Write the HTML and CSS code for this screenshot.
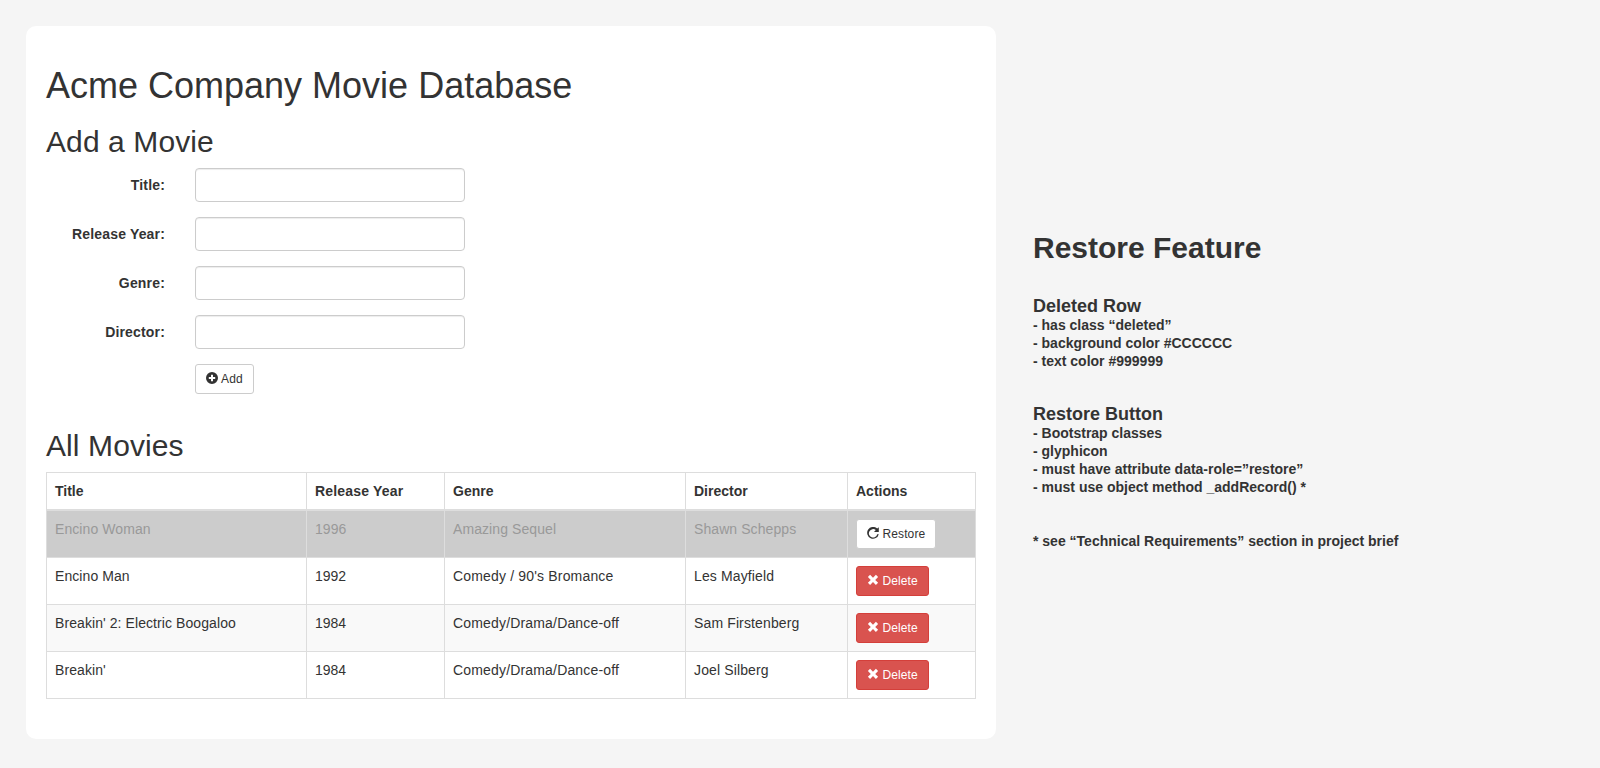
FILE: index.html
```html
<!DOCTYPE html>
<html lang="en">
<head>
<meta charset="utf-8">
<title>Acme Company Movie Database</title>
<link rel="stylesheet" href="styles.css">
</head>
<body>
<svg class="sprite" aria-hidden="true">
  <symbol id="plus" viewBox="0 0 12 12"><path fill-rule="evenodd" d="M6 0a6 6 0 1 0 0 12A6 6 0 0 0 6 0zM5 2.8h2V5h2.2v2H7v2.2H5V7H2.8V5H5z"/></symbol>
  <symbol id="remove" viewBox="0 0 12 12"><path d="M3.1 .8L6 3.7 8.9.8l2.2 2.2L8.2 5.9l2.9 2.9L8.9 11 6 8.1 3.1 11 .9 8.8l2.9-2.9L.9 3z"/></symbol>
  <symbol id="repeat" viewBox="0 0 12 12"><path d="M10.2 1.6L11.8 .2v4.7H7l1.8-1.8A4.2 4.2 0 1 0 10.2 7.2h1.6A5.9 5.9 0 1 1 10.2 1.6z"/></symbol>
</svg>
<main class="card">
  <h1>Acme Company Movie Database</h1>
  <h2>Add a Movie</h2>
  <form class="movie-form">
    <div class="form-group"><label for="title">Title:</label><input id="title" type="text"></div>
    <div class="form-group"><label for="year">Release Year:</label><input id="year" type="text"></div>
    <div class="form-group"><label for="genre">Genre:</label><input id="genre" type="text"></div>
    <div class="form-group"><label for="director">Director:</label><input id="director" type="text"></div>
    <div class="form-group actions"><button class="btn add" type="button"><svg class="icon"><use href="#plus"/></svg> Add</button></div>
  </form>
  <h2>All Movies</h2>
  <table class="movies">
    <colgroup><col class="c-title"><col class="c-year"><col class="c-genre"><col class="c-director"><col></colgroup>
    <thead>
      <tr><th>Title</th><th class="wide">Release Year</th><th>Genre</th><th>Director</th><th>Actions</th></tr>
    </thead>
    <tbody>
      <tr class="deleted"><td>Encino Woman</td><td>1996</td><td>Amazing Sequel</td><td>Shawn Schepps</td><td><button class="btn" type="button" data-role="restore"><svg class="icon"><use href="#repeat"/></svg> Restore</button></td></tr>
      <tr><td>Encino Man</td><td>1992</td><td>Comedy / 90's Bromance</td><td>Les Mayfield</td><td><button class="btn danger" type="button"><svg class="icon"><use href="#remove"/></svg> Delete</button></td></tr>
      <tr><td>Breakin' 2: Electric Boogaloo</td><td>1984</td><td>Comedy/Drama/Dance-off</td><td>Sam Firstenberg</td><td><button class="btn danger" type="button"><svg class="icon"><use href="#remove"/></svg> Delete</button></td></tr>
      <tr><td>Breakin'</td><td>1984</td><td>Comedy/Drama/Dance-off</td><td>Joel Silberg</td><td><button class="btn danger" type="button"><svg class="icon"><use href="#remove"/></svg> Delete</button></td></tr>
    </tbody>
  </table>
</main>
<aside class="notes">
  <h2>Restore Feature</h2>
  <section>
    <h3>Deleted Row</h3>
    <p>- has class “deleted”</p>
    <p>- background color #CCCCCC</p>
    <p>- text color #999999</p>
  </section>
  <section>
    <h3>Restore Button</h3>
    <p>- Bootstrap classes</p>
    <p>- glyphicon</p>
    <p>- must have attribute data-role=”restore”</p>
    <p>- must use object method _addRecord() *</p>
  </section>
  <p>* see “Technical Requirements” section in project brief</p>
</aside>
</body>
</html>
```
FILE: styles.css
```css
* { box-sizing: border-box; }

body {
  margin: 0;
  min-height: 768px;
  padding: 26px;
  display: flex;
  align-items: flex-start;
  gap: 37px;
  background: #f5f5f5;
  color: #333;
  font: 14px/20px "Liberation Sans", Arial, sans-serif;
}

.sprite { display: none; }

.card {
  flex: none;
  width: 970px;
  height: 713px;
  padding: 20px;
  border-radius: 10px;
  background: #fff;
}

.card h1, .card h2 { margin: 20px 0 10px; font-weight: 500; }
.card h1 { font-size: 36px; line-height: 39px; }
.card h2 { font-size: 30px; line-height: 33px; letter-spacing: .1px; }

.form-group { display: flex; gap: 30px; margin-bottom: 15px; }
.form-group label {
  width: 119px;
  padding-top: 7px;
  text-align: right;
  font-weight: bold;
  letter-spacing: .17px;
}
.form-group input {
  width: 270px;
  height: 34px;
  padding: 6px 12px;
  border: 1px solid #ccc;
  border-radius: 4px;
  box-shadow: inset 0 1px 1px rgba(0, 0, 0, .075);
  font: inherit;
}
.form-group.actions { padding-left: 149px; }
.movie-form { display: flow-root; }

.btn {
  display: inline-block;
  padding: 5px 10px;
  border: 1px solid #ccc;
  border-radius: 3px;
  background: #fff;
  color: #333;
  font: 12px/18px "Liberation Sans", Arial, sans-serif;
  letter-spacing: .12px;
  white-space: nowrap;
  vertical-align: middle;
}
.btn.add { width: 59px; letter-spacing: .2px; }
.btn.danger { background: #d9534f; border-color: #d43f3a; color: #fff; }
.icon {
  width: 12px;
  height: 12px;
  fill: currentColor;
  vertical-align: -1px;
}

.movies {
  width: 930px;
  table-layout: fixed;
  border-collapse: collapse;
  border: 1px solid #ddd;
}
.c-title { width: 260px; }
.c-year { width: 138px; }
.c-genre { width: 241px; }
.c-director { width: 162px; }
.movies th, .movies td {
  padding: 8px;
  border: 1px solid #ddd;
  text-align: left;
  vertical-align: top;
}
.movies th { border-bottom-width: 2px; }
.movies th.wide { letter-spacing: .18px; }
.movies td:first-child { letter-spacing: .08px; }
.movies td:nth-child(3) { letter-spacing: .17px; }
.movies td:nth-child(4) { letter-spacing: .13px; }
.movies tbody tr:nth-child(odd) { background: #f9f9f9; }
.movies tbody tr.deleted { background: #ccc; color: #999; }
.movies tbody tr.deleted td:nth-child(-n+4) { letter-spacing: .08px; }

.notes {
  padding-top: 205px;
  font-weight: bold;
  line-height: 18px;
  white-space: nowrap;
}
.notes h2, .notes h3, .notes p { margin: 0; }
.notes h2 { font-size: 30px; line-height: 34px; margin-bottom: 32px; }
.notes h3 { font-size: 18px; line-height: 18px; margin-bottom: 1px; }
.notes section { margin-bottom: 35px; }
.notes section + section { margin-bottom: 36px; }
```
